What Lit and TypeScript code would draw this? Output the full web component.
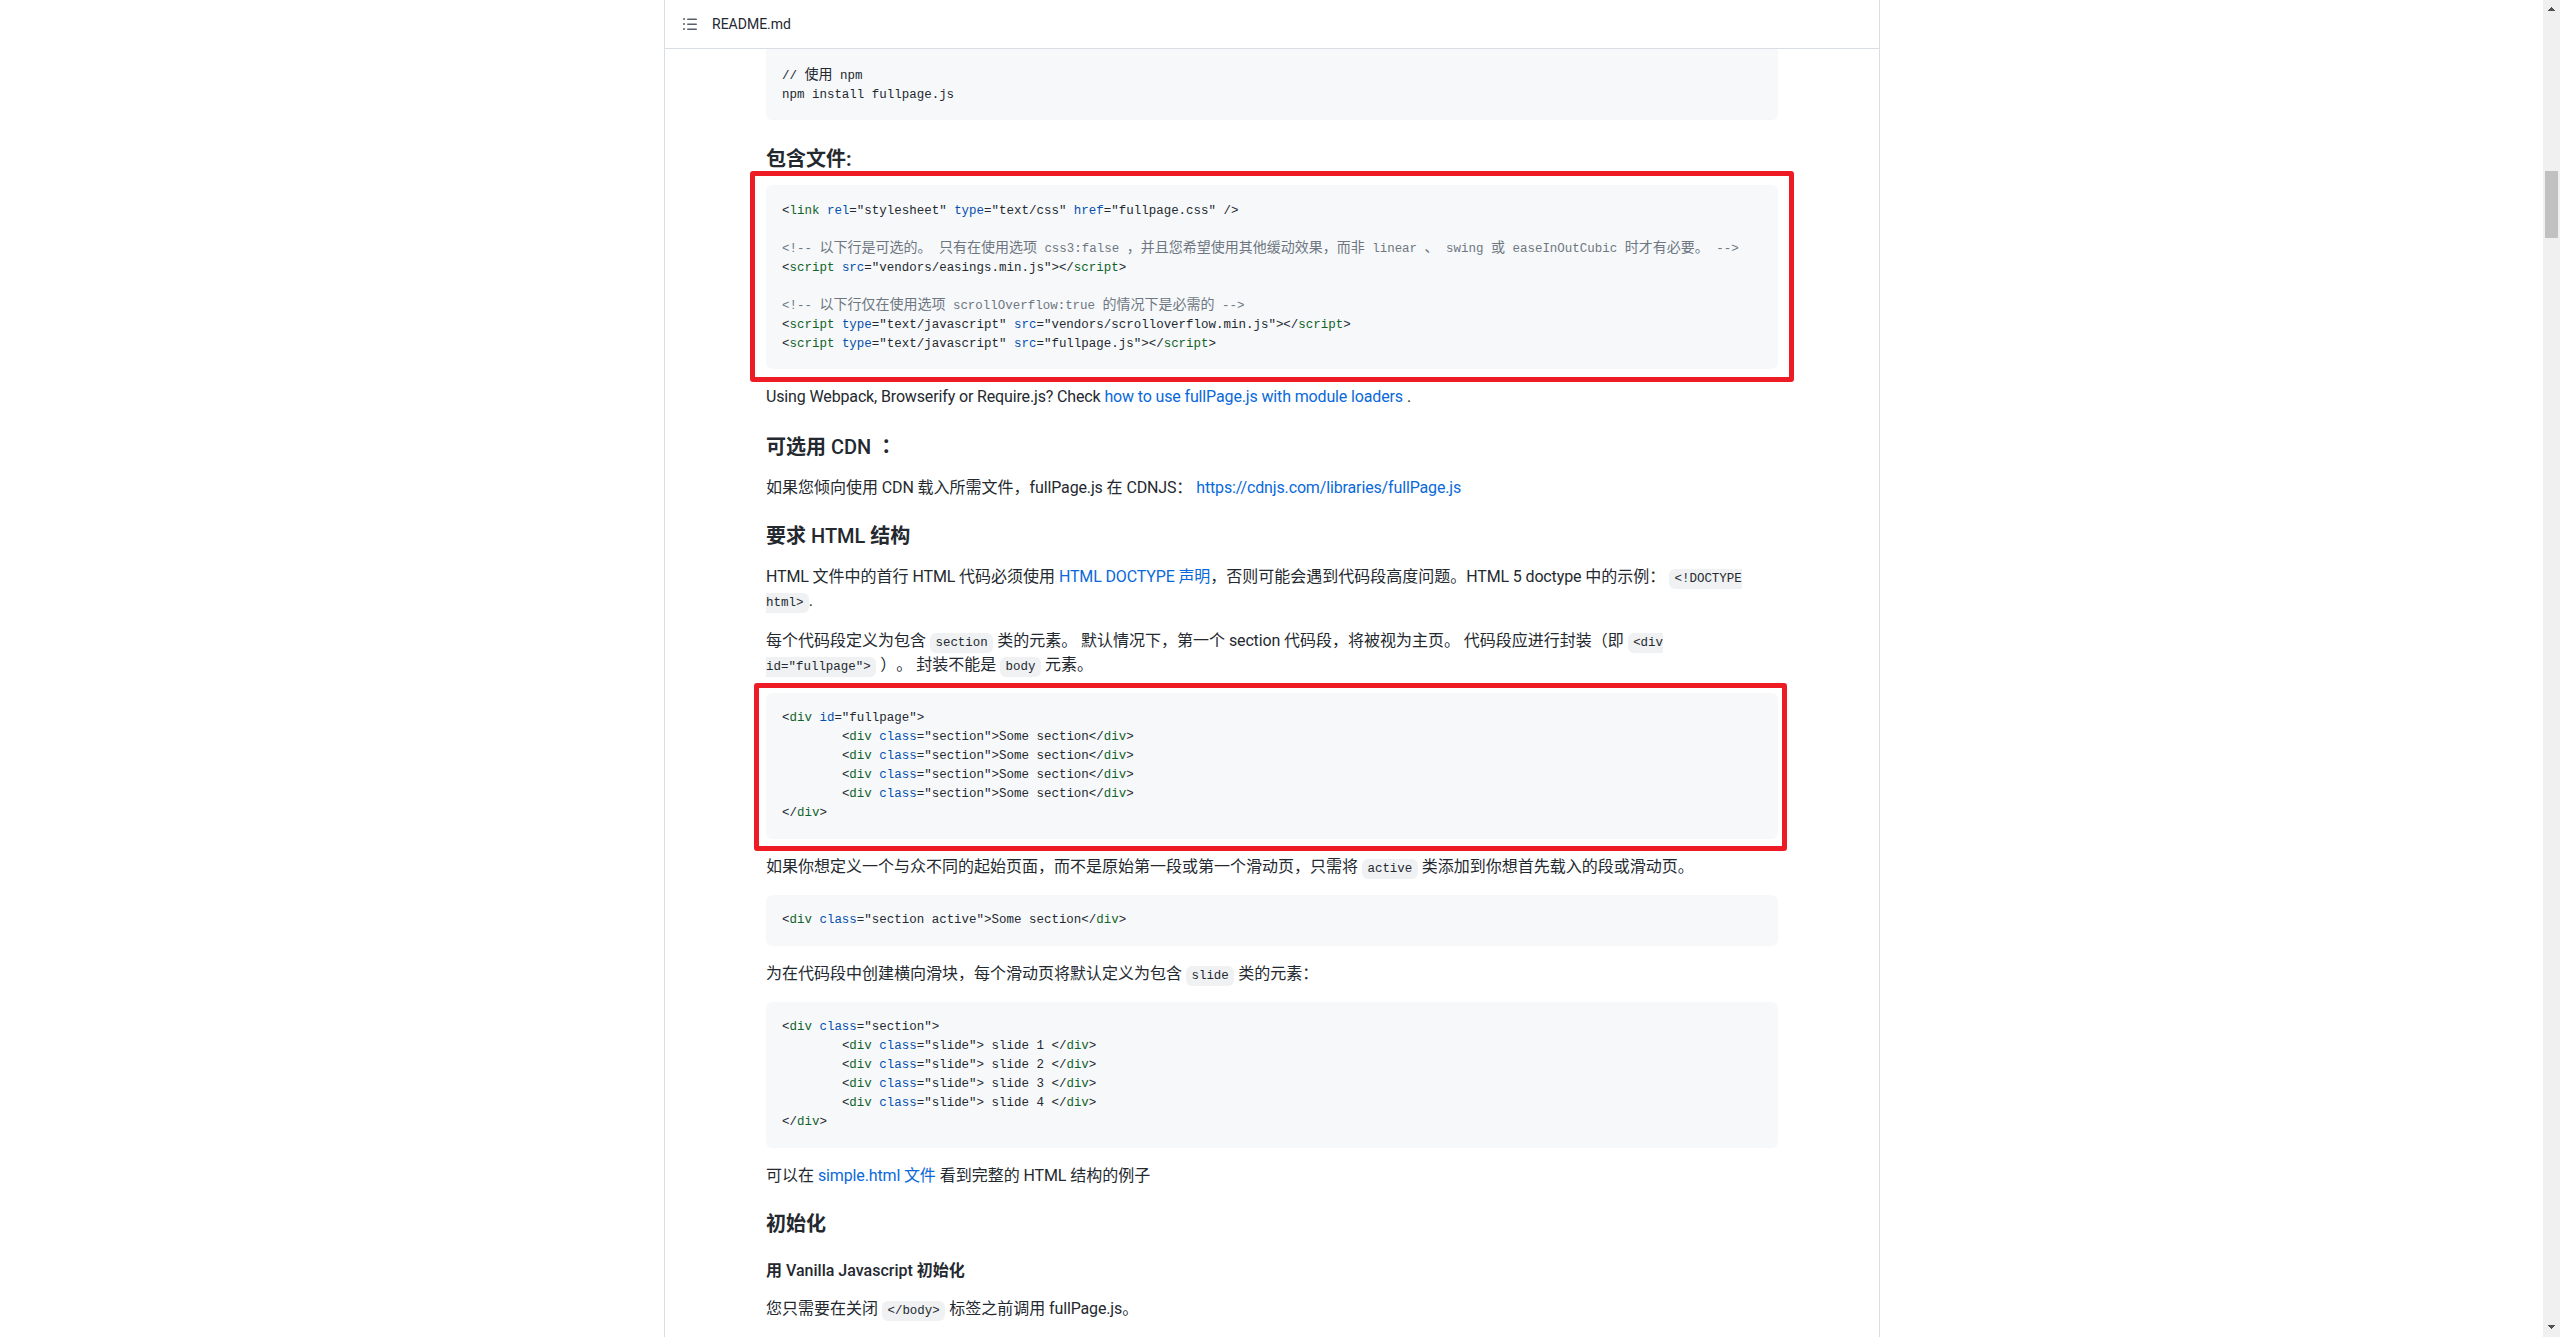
import { LitElement, html, css, TemplateResult } from "lit";
import { customElement } from "lit/decorators.js";

const CJK = /([\u3000-\u303f\u4e00-\u9fff\uff00-\uffef]+)/;
function cjk(s: string) {
  return s.split(CJK).map((p, i) => (i % 2 ? html`<span class="z">${p}</span>` : p));
}
/* Prose text: Latin runs get their own class, so they can be tightened without touching the CJK. */
function x(s: string) {
  return s.split(CJK).map((p, i) => (i % 2 || !p ? p : html`<span class="l">${p}</span>`));
}
const t = (s: string) => html`<span class="t">${s}</span>`;
const a = (s: string) => html`<span class="a">${s}</span>`;
const c = (s: string) => html`<span class="c">${cjk(s)}</span>`;

function divLine(attr: string, val: string, tail: TemplateResult | string, indent = false) {
  return html`${indent ? "\t" : ""}&lt;${t("div")} ${a(attr)}="${val}"&gt;${tail}`;
}
const closeDiv = html`&lt;/${t("div")}&gt;`;
const closeScript = html`&lt;/${t("script")}&gt;`;

@customElement("app-root")
export class AppRoot extends LitElement {
  static styles = css`
    :host { display: block; height: 1337px; overflow: hidden; background: #fff; position: relative; }
    .page { display: flex; height: 1337px; overflow: hidden; }
    .main { flex: 1; min-width: 0; display: flex; justify-content: flex-start; padding-left: 664px; box-sizing: border-box; }
    .card {
      width: 1216px; box-sizing: border-box; height: 1337px; overflow: hidden;
      border-left: 1px solid #d8dee4; border-right: 1px solid #d8dee4;
      color: #24292f; font: 16px/24px Roboto, "Noto Sans CJK SC", sans-serif;
      text-spacing-trim: space-all;
    }
    .head {
      height: 49px; box-sizing: border-box; border-bottom: 1px solid #d8dee4;
      display: flex; align-items: center; gap: 14px; padding-left: 17px; font-size: 14px;
    }
    .head svg { width: 16px; height: 16px; fill: #57606a; }
    .body { padding: 0 101px 0 101px; }
    h3 { font-size: 20px; line-height: 25px; font-weight: 700; margin: 24px 0 16px; }
    h3.low { margin: 27px 0 13px; }
    h4 { font-size: 16px; line-height: 20px; font-weight: 700; margin: 24px 0 16px; }
    h3 .l, h4 .l { font-weight: 500; letter-spacing: 0; }
    .l, a { letter-spacing: -0.14px; }
    .colon { font-family: "Noto Sans CJK TC", sans-serif; }
    p { margin: 0 0 16px; }
    a { color: #0969da; text-decoration: none; }
    code {
      font: 12.47px "Liberation Mono", "Noto Sans CJK SC", monospace;
      background: #eff1f3; padding: 3px 5.44px; border-radius: 6px;
    }
    pre {
      margin: 0 0 16px; padding: 16px; background: #f6f8fa; border-radius: 6px;
      font: 12.47px/19px "Liberation Mono", "Noto Sans CJK SC", monospace;
      tab-size: 8; color: #24292f; overflow: hidden;
    }
    pre.first { border-radius: 0 0 6px 6px; padding: 18px 16px 15px; }
    .box1 pre { padding: 17px 16px 15px; }
    pre.last { margin: 0; height: 200px; }
    .z { font-family: "Noto Sans CJK SC", sans-serif; font-size: 14px; line-height: 0; }
    .t { color: #116329; }
    .a { color: #0550ae; }
    .c { color: #6e7781; }
    .boxed { position: relative; margin-bottom: 16px; }
    .boxed pre { margin-bottom: 0; }
    .boxed::after {
      content: ""; position: absolute; border: 5px solid #ed1c24; border-radius: 3px; pointer-events: none;
    }
    .box1::after { inset: -14px -16px -13px -16px; }
    .box2::after { inset: -10px -9px -12px -12px; }
    .bar { width: 17px; flex: none; background: #f0f0f0; position: relative; }
    .thumb { position: absolute; left: 2px; top: 171px; width: 13px; height: 67px; background: #c1c1c1; }
    .arrow { position: absolute; left: 5px; width: 7px; height: 4px; fill: #505050; shape-rendering: crispEdges; }
    .up { top: 7px; }
    .down { bottom: 8px; }
  `;

  render() {
    return html`<div class="page">
      <div class="main">
        <div class="card">
          <div class="head">
            <svg viewBox="0 0 16 16"><path d="M5.75 2.5h8.5a.75.75 0 0 1 0 1.5h-8.5a.75.75 0 0 1 0-1.5Zm0 5h8.5a.75.75 0 0 1 0 1.5h-8.5a.75.75 0 0 1 0-1.5Zm0 5h8.5a.75.75 0 0 1 0 1.5h-8.5a.75.75 0 0 1 0-1.5ZM2 14a1 1 0 1 1 0-2 1 1 0 0 1 0 2Zm1-6a1 1 0 1 1-2 0 1 1 0 0 1 2 0ZM2 4a1 1 0 1 1 0-2 1 1 0 0 1 0 2Z"/></svg>
            <span>README.md</span>
          </div>
          <div class="body">
            <pre class="first">// ${cjk("使用")} npm
npm install fullpage.js</pre>
            <h3 class="low">包含文件:</h3>
            <div class="boxed box1"><pre>&lt;${t("link")} ${a("rel")}="stylesheet" ${a("type")}="text/css" ${a("href")}="fullpage.css" /&gt;

${c("<!-- 以下行是可选的。 只有在使用选项 css3:false ，并且您希望使用其他缓动效果，而非 linear 、 swing 或 easeInOutCubic 时才有必要。 -->")}
&lt;${t("script")} ${a("src")}="vendors/easings.min.js"&gt;${closeScript}

${c("<!-- 以下行仅在使用选项 scrollOverflow:true 的情况下是必需的 -->")}
&lt;${t("script")} ${a("type")}="text/javascript" ${a("src")}="vendors/scrolloverflow.min.js"&gt;${closeScript}
&lt;${t("script")} ${a("type")}="text/javascript" ${a("src")}="fullpage.js"&gt;${closeScript}</pre></div>
            <p>${x("Using Webpack, Browserify or Require.js? Check ")}<a>how to use fullPage.js with module loaders</a> .</p>
            <h3>${x("可选用 CDN ")}<span class="colon">：</span></h3>
            <p>${x("如果您倾向使用 CDN 载入所需文件，fullPage.js 在 CDNJS： ")}<a>https://cdnjs.com/libraries/fullPage.js</a></p>
            <h3>${x("要求 HTML 结构")}</h3>
            <p>${x("HTML 文件中的首行 HTML 代码必须使用 ")}<a>HTML DOCTYPE 声明</a>${x("，否则可能会遇到代码段高度问题。HTML 5 doctype 中的示例： ")}<code>&lt;!DOCTYPE html&gt;</code>.</p>
            <p>每个代码段定义为包含 <code>section</code> ${x("类的元素。 默认情况下，第一个 section 代码段，将被视为主页。 代码段应进行封装（即 ")}<code>&lt;div id="fullpage"&gt;</code> ）。 封装不能是 <code>body</code> 元素。</p>
            <div class="boxed box2"><pre>${divLine("id", "fullpage", "")}
${[0, 1, 2, 3].map(() => html`${divLine("class", "section", html`Some section${closeDiv}`, true)}
`)}${closeDiv}</pre></div>
            <p>如果你想定义一个与众不同的起始页面，而不是原始第一段或第一个滑动页，只需将 <code>active</code> 类添加到你想首先载入的段或滑动页。</p>
            <pre>${divLine("class", "section active", html`Some section${closeDiv}`)}</pre>
            <p>为在代码段中创建横向滑块，每个滑动页将默认定义为包含 <code>slide</code> 类的元素：</p>
            <pre>${divLine("class", "section", "")}
${[1, 2, 3, 4].map((n) => html`${divLine("class", "slide", html` slide ${n} ${closeDiv}`, true)}
`)}${closeDiv}</pre>
            <p>可以在 <a>simple.html 文件</a> ${x("看到完整的 HTML 结构的例子")}</p>
            <h3>初始化</h3>
            <h4>${x("用 Vanilla Javascript 初始化")}</h4>
            <p>您只需要在关闭 <code>&lt;/body&gt;</code> ${x("标签之前调用 fullPage.js。")}</p>
            <pre class="last"></pre>
          </div>
        </div>
      </div>
      <div class="bar">
        <svg class="arrow up" viewBox="0 0 7 4"><path d="M3.5 0 7 4H0Z"/></svg>
        <div class="thumb"></div>
        <svg class="arrow down" viewBox="0 0 7 4"><path d="M0 0h7L3.5 4Z"/></svg>
      </div>
    </div>`;
  }
}
